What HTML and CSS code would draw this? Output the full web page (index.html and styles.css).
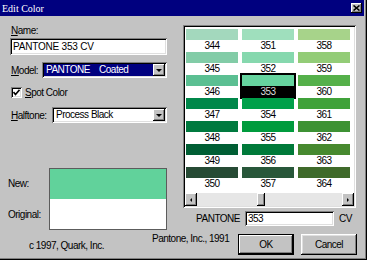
FILE: index.html
```html
<html>
  <head>
    <title>Edit Color</title>
    <link rel="stylesheet" href="styles.css">
  </head>
  <body>
  <div class="dialog">
    <div class="titlebar">
      <span class="title">Edit Color</span>
      <span class="close">
        <svg width="7" height="6" viewBox="0 0 7 6"><path d="M0.5 0.5 L6.5 5.5 M6.5 0.5 L0.5 5.5" stroke="#000" stroke-width="1.6"/></svg>
      </span>
    </div>

    <div class="main">
      <div class="left">
        <div class="label"><u>N</u>ame:</div>
        <div class="field name-field">PANTONE 353 CV</div>

        <div class="row model-row">
          <span class="row-label"><u>M</u>odel:</span>
          <div class="combo model-combo">
            <span class="combo-text selected">PANTONE&nbsp;&nbsp;&nbsp;&nbsp;Coated</span>
            <span class="drop"></span>
          </div>
        </div>

        <div class="row spot-row">
          <span class="check">
            <svg width="7" height="7" viewBox="0 0 7 7"><path d="M0.5 3 L2.5 5.5 L6.5 0.8" stroke="#000" stroke-width="1.6" fill="none"/></svg>
          </span>
          <span class="check-label"><u>S</u>pot Color</span>
        </div>

        <div class="row halftone-row">
          <span class="row-label"><u>H</u>alftone:</span>
          <div class="combo halftone-combo">
            <span class="combo-text">Process Black</span>
            <span class="drop"></span>
          </div>
        </div>

        <div class="compare">
          <div class="compare-labels">
            <span>New:</span>
            <span>Original:</span>
          </div>
          <div class="compare-box">
            <div class="new-color"></div>
            <div class="orig-color"></div>
          </div>
        </div>
      </div>

      <div class="right">
        <div class="listbox">
          <div class="swatches">
            <div class="cell"><div class="chip c344"></div><div class="num">344</div></div>
            <div class="cell"><div class="chip c345"></div><div class="num">345</div></div>
            <div class="cell"><div class="chip c346"></div><div class="num">346</div></div>
            <div class="cell"><div class="chip c347"></div><div class="num">347</div></div>
            <div class="cell"><div class="chip c348"></div><div class="num">348</div></div>
            <div class="cell"><div class="chip c349"></div><div class="num">349</div></div>
            <div class="cell"><div class="chip c350"></div><div class="num">350</div></div>
            <div class="cell"><div class="chip c351"></div><div class="num">351</div></div>
            <div class="cell"><div class="chip c352"></div><div class="num">352</div></div>
            <div class="cell sel"><div class="chip c353"></div><div class="num">353</div></div>
            <div class="cell"><div class="chip c354"></div><div class="num">354</div></div>
            <div class="cell"><div class="chip c355"></div><div class="num">355</div></div>
            <div class="cell"><div class="chip c356"></div><div class="num">356</div></div>
            <div class="cell"><div class="chip c357"></div><div class="num">357</div></div>
            <div class="cell"><div class="chip c358"></div><div class="num">358</div></div>
            <div class="cell"><div class="chip c359"></div><div class="num">359</div></div>
            <div class="cell"><div class="chip c360"></div><div class="num">360</div></div>
            <div class="cell"><div class="chip c361"></div><div class="num">361</div></div>
            <div class="cell"><div class="chip c362"></div><div class="num">362</div></div>
            <div class="cell"><div class="chip c363"></div><div class="num">363</div></div>
            <div class="cell"><div class="chip c364"></div><div class="num">364</div></div>
          </div>
          <div class="hscroll">
            <span class="sb-btn sb-left"></span>
            <div class="sb-track"><span class="sb-thumb"></span></div>
            <span class="sb-btn sb-right"></span>
          </div>
        </div>

        <div class="pantone-row">
          <span class="pantone-label">PANTONE</span>
          <div class="field pantone-field">353</div>
          <span>CV</span>
        </div>
      </div>
    </div>

    <div class="footer">
      <span class="quark">c 1997, Quark, Inc.</span>
      <span class="pantone-credit">Pantone, Inc., 1991</span>
      <span class="btn btn-default">OK</span>
      <span class="btn">Cancel</span>
    </div>
  </div>
  </body>
</html>
```

FILE: styles.css
```css
body {
  margin: 0;
  background: #c3c3c3;
  font-family: "Liberation Sans", Arial, sans-serif;
  font-size: 10px;
  letter-spacing: -0.5px;
  color: #000;
}

.dialog {
  width: 367px;
  height: 260px;
  box-sizing: border-box;
  padding-right: 3px;
  background: #c3c3c3;
  box-shadow: inset -1px -1px #000, inset -2px -2px #808080;
  overflow: hidden;
}

/* title bar */
.titlebar {
  height: 16px;
  background: #00007f;
  color: #fff;
  display: flex;
  align-items: center;
  justify-content: space-between;
  padding: 0 2px 0 2px;
}
.title {
  font-family: "Liberation Serif", serif;
  font-size: 10px;
  letter-spacing: 0;
}
.close {
  width: 11px;
  height: 10px;
  background: #c3c3c3;
  box-shadow: inset -1px -1px #000, inset 1px 1px #fff, inset -2px -2px #808080;
  display: flex;
  align-items: center;
  justify-content: center;
}

/* shared bevels */
.field {
  background: #fff;
  box-sizing: border-box;
  box-shadow: inset 1px 1px #808080, inset -1px -1px #fff, inset 2px 2px #000, inset -2px -2px #dfdfdf;
}

.main {
  display: grid;
  grid-template-columns: 183px 1fr;
  padding-bottom: 2px;
}

/* left column */
.left {
  padding-left: 10px;
}
.label {
  margin: 8px 0 0 1px;
  line-height: 13px;
}
.name-field {
  margin-top: 1px;
  width: 157px;
  height: 17px;
  padding: 2px 3px;
  line-height: 13px;
  letter-spacing: -0.2px;
}
.row {
  display: flex;
  align-items: center;
}
.row-label {
  margin-left: 1px;
}
.model-row {
  margin-top: 7px;
  height: 16px;
}
.model-row .row-label {
  width: 31px;
}
.halftone-row {
  margin-top: 8px;
  height: 16px;
}
.halftone-row .row-label {
  width: 41px;
}
.combo {
  box-sizing: border-box;
  height: 16px;
  padding: 2px;
  display: flex;
  background: #fff;
  box-shadow: inset 1px 1px #808080, inset -1px -1px #fff, inset 2px 2px #000, inset -2px -2px #dfdfdf;
}
.model-combo {
  width: 125px;
}
.halftone-combo {
  width: 115px;
}
.combo-text {
  flex: 1;
  line-height: 12px;
  padding-left: 2px;
  white-space: nowrap;
}
.combo-text.selected {
  background: #00007f;
  color: #fff;
}
.drop {
  width: 12px;
  height: 12px;
  background: #c3c3c3;
  box-shadow: inset -1px -1px #000, inset 1px 1px #fff, inset -2px -2px #808080;
  display: flex;
  align-items: center;
  justify-content: center;
}
.drop::after {
  content: "";
  border-left: 3px solid transparent;
  border-right: 3px solid transparent;
  border-top: 3px solid #000;
}

.spot-row {
  margin-top: 8px;
  height: 13px;
}
.check {
  margin-left: 1px;
  width: 11px;
  height: 11px;
  box-sizing: border-box;
  background: #fff;
  box-shadow: inset 1px 1px #808080, inset -1px -1px #fff, inset 2px 2px #000, inset -2px -2px #dfdfdf;
  display: flex;
  align-items: center;
  justify-content: center;
}
.check-label {
  margin-left: 3px;
}

.compare {
  margin: 45px 0 0 -2px;
  display: flex;
}
.compare-labels {
  width: 41px;
  display: flex;
  flex-direction: column;
}
.compare-labels span {
  height: 31px;
  line-height: 31px;
}
.compare-box {
  width: 118px;
  height: 62px;
  box-sizing: border-box;
  border: 1px solid #5c5c5c;
  display: flex;
  flex-direction: column;
}
.new-color {
  flex: 1;
  background: #61d29b;
}
.orig-color {
  flex: 1;
  background: #fff;
}

/* right column */
.listbox {
  margin-top: 9px;
  width: 173px;
  height: 183px;
  box-sizing: border-box;
  padding: 2px;
  background: #fff;
  display: flex;
  flex-direction: column;
  box-shadow: inset 1px 1px #808080, inset -1px -1px #fff, inset 2px 2px #000, inset -2px -2px #dfdfdf;
}
.swatches {
  flex: 1;
  display: grid;
  grid-template-columns: repeat(3, 52px);
  grid-template-rows: repeat(7, 23px);
  grid-auto-flow: column;
  column-gap: 4px;
  padding: 2px 0 0 1px;
}
.cell {
  display: flex;
  flex-direction: column;
  height: 22px;
}
.chip {
  height: 11px;
}
.num {
  height: 11px;
  line-height: 11px;
  text-align: center;
}
.cell.sel {
  box-shadow: 0 0 0 2px #000;
}
.cell.sel .num {
  background: #000;
  color: #dcdcdc;
}

.c344 { background: #a3d8bd; }
.c345 { background: #82cca7; }
.c346 { background: #5bbf92; }
.c347 { background: #00874a; }
.c348 { background: #007a3f; }
.c349 { background: #005e34; }
.c350 { background: #264a34; }
.c351 { background: #9fdfbd; }
.c352 { background: #86d8ae; }
.c353 { background: #66d49f; }
.c354 { background: #00a04a; }
.c355 { background: #009b3d; }
.c356 { background: #007a3a; }
.c357 { background: #28573a; }
.c358 { background: #a7d38a; }
.c359 { background: #93cc77; }
.c360 { background: #55b04a; }
.c361 { background: #40a23a; }
.c362 { background: #3e9234; }
.c363 { background: #47892f; }
.c364 { background: #3f6a2a; }

.hscroll {
  height: 13px;
  display: flex;
}
.sb-btn {
  width: 12px;
  background: #c3c3c3;
  box-shadow: inset -1px -1px #000, inset 1px 1px #fff, inset -2px -2px #808080;
  display: flex;
  align-items: center;
  justify-content: center;
}
.sb-left::after {
  content: "";
  border-top: 2px solid transparent;
  border-bottom: 2px solid transparent;
  border-right: 2px solid #000;
}
.sb-right::after {
  content: "";
  border-top: 2px solid transparent;
  border-bottom: 2px solid transparent;
  border-left: 2px solid #000;
}
.sb-track {
  flex: 1;
  display: flex;
  background: #e6e6e6;
}
.sb-thumb {
  margin-left: 60px;
  width: 8px;
  background: #c3c3c3;
  box-shadow: inset -1px -1px #000, inset 1px 1px #fff, inset -2px -2px #808080;
}

.pantone-row {
  margin-top: 3px;
  height: 15px;
  display: grid;
  grid-template-columns: 57px 89px auto;
  column-gap: 5px;
  align-items: center;
}
.pantone-label {
  text-align: right;
}
.pantone-field {
  height: 15px;
  line-height: 13px;
  padding: 1px 3px;
}

/* bottom strip */
.footer {
  display: grid;
  grid-template-columns: 152px 86px 63px 56px;
  align-items: start;
}
.quark {
  padding-left: 29px;
  margin-top: 7px;
  line-height: 13px;
}
.pantone-credit {
  line-height: 13px;
  white-space: nowrap;
}
.btn {
  margin-top: 2px;
  width: 56px;
  height: 21px;
  box-sizing: border-box;
  display: flex;
  align-items: center;
  justify-content: center;
  background: #c3c3c3;
  box-shadow: inset -1px -1px #000, inset 1px 1px #fff, inset -2px -2px #808080, inset 2px 2px #dfdfdf;
}
.btn-default {
  box-shadow: inset 0 0 0 1px #000, inset -2px -2px #000, inset 2px 2px #fff, inset -3px -3px #808080;
}
```
